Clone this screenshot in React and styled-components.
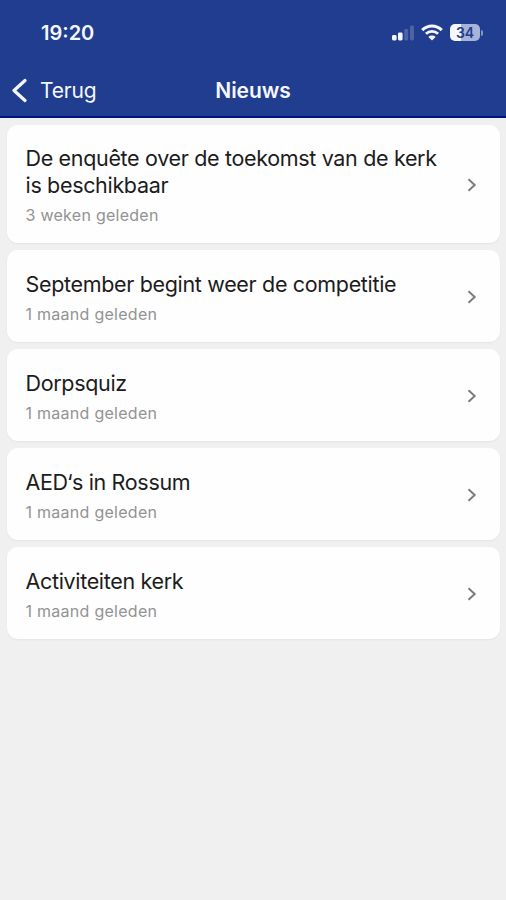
import React from 'react';
import styled, { createGlobalStyle } from 'styled-components';

const newsItems = [
  { title: 'De enquête over de toekomst van de kerk is beschikbaar', age: '3 weken geleden' },
  { title: 'September begint weer de competitie', age: '1 maand geleden' },
  { title: 'Dorpsquiz', age: '1 maand geleden' },
  { title: 'AED‘s in Rossum', age: '1 maand geleden' },
  { title: 'Activiteiten kerk', age: '1 maand geleden' },
];

const App = () => {
  return (
    <Screen>
      <GlobalStyle />
      <Header>
        <StatusBar>
          <Time>19:20</Time>
          <StatusIcons>
            <SignalIcon />
            <WifiIcon />
            <Battery>
              <BatteryBody>34</BatteryBody>
              <BatteryTip />
            </Battery>
          </StatusIcons>
        </StatusBar>
        <NavBar>
          <BackButton>
            <svg width="16" height="26" viewBox="0 0 16 26" fill="none">
              <path d="M14 2.5 L3 12.5 L14 22.5" stroke="#f6f8ff" strokeWidth="3.2" strokeLinecap="round" strokeLinejoin="round" />
            </svg>
            <BackLabel>Terug</BackLabel>
          </BackButton>
          <Heading>Nieuws</Heading>
        </NavBar>
      </Header>
      <NewsList>
        {newsItems.map((item) => (
          <Card key={item.title}>
            <CardText>
              <Title>{item.title}</Title>
              <Age>{item.age}</Age>
            </CardText>
            <Chevron width="10" height="14" viewBox="0 0 10 14" fill="none">
              <path d="M1.5 1.2 L7.7 7 L1.5 12.8" stroke="#7c7c7c" strokeWidth="2" />
            </Chevron>
          </Card>
        ))}
      </NewsList>
    </Screen>
  );
};

const SignalIcon = () => (
  <svg width="24" height="16" viewBox="0 0 24 16">
    <rect x="2" y="10" width="4.6" height="5.5" rx="1.4" fill="#f5f7ff" />
    <rect x="8" y="7.5" width="4.6" height="8" rx="1.4" fill="#f5f7ff" />
    <rect x="14.2" y="4" width="4" height="11.5" rx="1.4" fill="#fff" opacity="0.2" />
    <rect x="20" y="0.5" width="4" height="15" rx="1.4" fill="#fff" opacity="0.2" />
  </svg>
);

const WifiIcon = () => (
  <svg width="22" height="17" viewBox="0 0 22 17" fill="none">
    <path d="M1.2 6.1 C6.8 0.6 15.2 0.6 20.8 6.1" stroke="#f5f7ff" strokeWidth="3" />
    <path d="M4.9 9.8 C8.4 6.5 13.6 6.5 17.1 9.8" stroke="#f5f7ff" strokeWidth="2.7" />
    <path d="M11 16.5 L7.4 12.9 C9.4 11 12.6 11 14.6 12.9 Z" fill="#f5f7ff" />
  </svg>
);

const GlobalStyle = createGlobalStyle`
  * {
    box-sizing: border-box;
  }

  body {
    margin: 0;
    background: #f0f0f0;
    font-family: Inter, 'Liberation Sans', sans-serif;
  }
`;

const Screen = styled.div`
  width: 100%;
  min-height: 900px;
  background: #f0f0f0;
`;

const Header = styled.header`
  height: 118px;
  background: #213d8f;
  border-bottom: 2px solid #001487;
  color: #f5f7ff;
`;

const StatusBar = styled.div`
  display: flex;
  justify-content: space-between;
  align-items: center;
  height: 65px;
  padding: 0 23px 0 41px;
`;

const Time = styled.span`
  font-size: 20px;
  font-weight: 600;
`;

const StatusIcons = styled.div`
  display: flex;
  align-items: center;
  gap: 7px;
`;

const Battery = styled.div`
  display: flex;
  align-items: center;
  gap: 1px;
`;

const BatteryBody = styled.div`
  width: 30px;
  height: 17px;
  border-radius: 5px;
  background: linear-gradient(90deg, #f5f7ff 36%, #a7b3d8 36%);
  color: #213d8f;
  font-size: 14px;
  font-weight: 600;
  line-height: 17px;
  text-align: center;
`;

const BatteryTip = styled.div`
  width: 2px;
  height: 6px;
  border-radius: 0 2px 2px 0;
  background: #8494c4;
`;

const NavBar = styled.nav`
  display: grid;
  grid-template-columns: 1fr auto 1fr;
  align-items: center;
  height: 51px;
  padding: 1px 11px 0;
`;

const BackButton = styled.button`
  display: flex;
  align-items: center;
  gap: 13px;
  padding: 0;
  border: none;
  background: none;
  color: inherit;
  font: inherit;
`;

const BackLabel = styled.span`
  font-size: 21px;
  line-height: 26px;
  letter-spacing: -0.2px;
`;

const Heading = styled.h1`
  margin: 0;
  font-size: 21px;
  font-weight: 600;
  line-height: 26px;
  letter-spacing: -0.1px;
`;

const NewsList = styled.main`
  display: flex;
  flex-direction: column;
  gap: 7px;
  padding: 7px 6px 0 7px;
`;

const Card = styled.article`
  display: flex;
  align-items: center;
  justify-content: space-between;
  padding: 20.2px 23px 17.4px 18.5px;
  border-radius: 11px;
  background: #fefefe;
  box-shadow: 0 1px 2px rgba(0, 0, 0, 0.05);
`;

const CardText = styled.div`
  width: 425px;
`;

const Title = styled.h2`
  margin: 0;
  color: #1c1c1c;
  font-size: 21.5px;
  font-weight: 400;
  line-height: 26.4px;
  letter-spacing: -0.33px;
`;

const Age = styled.p`
  margin: 6.8px 0 0;
  color: #939393;
  font-size: 16px;
  line-height: 21.2px;
  letter-spacing: 0.27px;
`;

const Chevron = styled.svg`
  flex-shrink: 0;
  margin-bottom: 2px;
`;

export default App;
